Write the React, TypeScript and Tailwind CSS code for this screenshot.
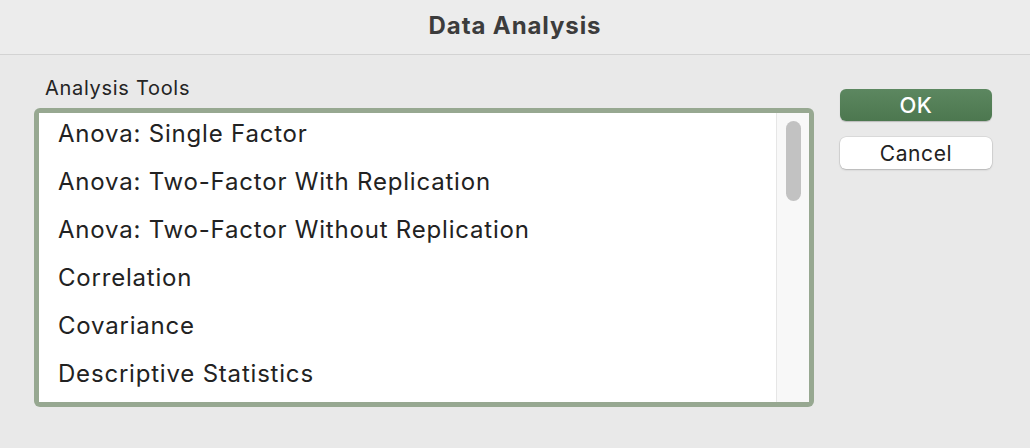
import React from "react";

const items = [
  "Anova: Single Factor",
  "Anova: Two-Factor With Replication",
  "Anova: Two-Factor Without Replication",
  "Correlation",
  "Covariance",
  "Descriptive Statistics",
];

export default function App() {
  return (
    <div
      className="w-[1030px] h-[448px] bg-[#e9e9e9] overflow-hidden text-[#262626]"
      style={{ fontFamily: 'Inter, "Liberation Sans", Arial, sans-serif' }}
    >
      <div className="h-[55px] bg-[#ececec] border-b border-[#d3d3d3] flex items-center justify-center pb-[3px]">
        <span className="text-[24px] font-bold text-[#3c3c3c] tracking-[0.9px]">Data Analysis</span>
      </div>
      <div className="flex pl-[34px] pt-[20px]">
        <div className="flex flex-col">
          <div className="pl-[11px] text-[20px] leading-[26px] text-[#242424] tracking-[0.7px]">Analysis Tools</div>
          <div className="mt-[7px] w-[780px] h-[299px] rounded-[6px] bg-[#97a891] p-[5px]">
            <div className="h-full bg-white flex">
              <div className="flex-1 flex flex-col pl-[19px] -mt-[3px]">
                {items.map((t) => (
                  <div key={t} className="h-[48px] flex items-center text-[24px] text-[#222] tracking-[0.8px]">
                    {t}
                  </div>
                ))}
              </div>
              <div className="w-[33px] bg-[#f8f8f8] border-l border-[#e6e6e6] flex justify-center pt-[8px]">
                <div className="w-[15px] h-[80px] rounded-full bg-[#c2c2c2]" />
              </div>
            </div>
          </div>
        </div>
        <div className="ml-[26px] mt-[14px] flex flex-col gap-[16px]">
          <button className="w-[152px] h-[32px] rounded-[6px] bg-gradient-to-b from-[#5c8760] to-[#4c774f] text-white text-[22px] font-medium tracking-[0.5px] leading-none flex items-center justify-center shadow-[0_1px_1px_rgba(0,0,0,0.2)]">
            OK
          </button>
          <button className="w-[152px] h-[32px] rounded-[6px] bg-white text-[#222] text-[21px] tracking-[0.6px] leading-none flex items-center justify-center shadow-[0_0_0_0.5px_rgba(0,0,0,0.12),0_1px_2px_rgba(0,0,0,0.18)]">
            Cancel
          </button>
        </div>
      </div>
    </div>
  );
}
